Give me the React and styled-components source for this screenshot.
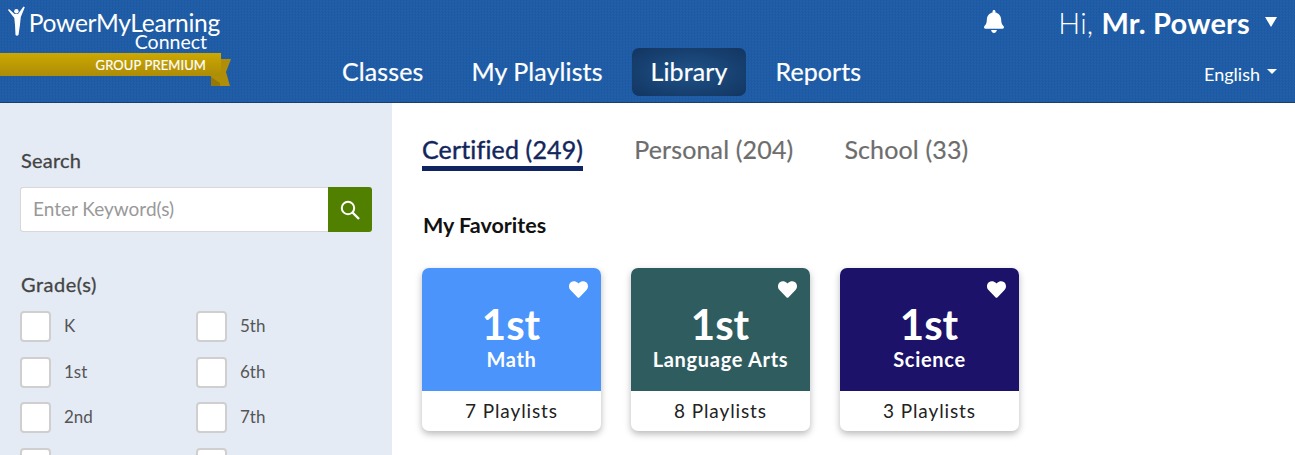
import styled, { createGlobalStyle } from 'styled-components';
import { FaBell, FaHeart } from 'react-icons/fa';

const GlobalStyle = createGlobalStyle`
  html, body { margin: 0; padding: 0; height: 100%; overflow: hidden; background: #fff; }
  body { font-family: Lato, "Open Sans", "Liberation Sans", sans-serif; }
`;

const grades = ['K', '5th', '1st', '6th', '2nd', '7th', '', ''];

const favorites = [
  { subject: 'Math', count: '7 Playlists', color: '#4a94fb' },
  { subject: 'Language Arts', count: '8 Playlists', color: '#2f5d5f' },
  { subject: 'Science', count: '3 Playlists', color: '#1c1269' },
];

export default function App() {
  return (
    <Page>
      <GlobalStyle />
      <Header>
        <Logo>
          <LogoTop>
            <Figure viewBox="0 0 18 31">
              <path
                d="M0 4 L1 3 L6.5 8 L10 8 L15.5 .5 L16.8 1.2 L12.8 11 L11.8 20 L10.5 29 Q9 30.5 7.5 29 L7 19 L6.3 12 Z"
                fill="#fff"
              />
              <circle cx="8.4" cy="5.2" r="2.2" fill="#fff" />
            </Figure>
            <LogoWords>
              <LogoName>PowerMyLearning</LogoName>
              <LogoSub>Connect</LogoSub>
            </LogoWords>
          </LogoTop>
          <Ribbon>
            <RibbonTail viewBox="0 0 20 28">
              <path d="M0 0 H20 L15 13 L19 27 H0 Z" fill="#b08e08" />
              <path d="M0 18 L9 24 V27 H0 Z" fill="#967804" />
            </RibbonTail>
            <RibbonBand>GROUP PREMIUM</RibbonBand>
          </Ribbon>
        </Logo>
        <HeaderMain>
          <TopRow>
            <BellIcon />
            <Greeting>
              Hi, <strong>Mr. Powers</strong>
            </Greeting>
            <BigCaret viewBox="0 0 12 10">
              <path d="M0 0 H12 L6 10 Z" fill="#fff" />
            </BigCaret>
          </TopRow>
          <BottomRow>
            <Nav>
              <NavItem>Classes</NavItem>
              <NavItem>My Playlists</NavItem>
              <NavItem $active>Library</NavItem>
              <NavItem>Reports</NavItem>
            </Nav>
            <Language>
              English
              <SmallCaret viewBox="0 0 10 5">
                <path d="M0 0 H10 L5 5 Z" fill="#fff" />
              </SmallCaret>
            </Language>
          </BottomRow>
        </HeaderMain>
      </Header>
      <Body>
        <Sidebar>
          <FilterLabel>Search</FilterLabel>
          <SearchBox>
            <SearchInput placeholder="Enter Keyword(s)" />
            <SearchButton>
              <svg width="22" height="22" viewBox="0 0 22 22" fill="none" stroke="#fff">
                <circle cx="9" cy="9" r="6.2" strokeWidth="2" />
                <path d="M13.5 13.5 L20 20" strokeWidth="2.4" />
              </svg>
            </SearchButton>
          </SearchBox>
          <GradeLabel>Grade(s)</GradeLabel>
          <GradeGrid>
            {grades.map((grade, index) => (
              <GradeOption key={index}>
                <CheckBox />
                <GradeText>{grade}</GradeText>
              </GradeOption>
            ))}
          </GradeGrid>
        </Sidebar>
        <Content>
          <Tabs>
            <Tab $active>Certified (249)</Tab>
            <Tab>Personal (204)</Tab>
            <Tab>School (33)</Tab>
          </Tabs>
          <SectionTitle>My Favorites</SectionTitle>
          <Cards>
            {favorites.map((item) => (
              <Card key={item.subject}>
                <CardTop $color={item.color}>
                  <HeartIcon />
                  <CardGrade>1st</CardGrade>
                  <CardSubject>{item.subject}</CardSubject>
                </CardTop>
                <CardCount>{item.count}</CardCount>
              </Card>
            ))}
          </Cards>
        </Content>
      </Body>
    </Page>
  );
}

const Page = styled.div`
  width: 1295px;
  height: 455px;
  overflow: hidden;
  display: flex;
  flex-direction: column;
`;
const Header = styled.header`
  height: 102px;
  flex: none;
  display: flex;
  background: repeating-conic-gradient(#1e5aa3 0 25%, #2160a8 0 50%) 0 0 / 3px 3px;
  border-bottom: 1px solid #17406f;
`;
const Logo = styled.div`
  width: 323.5px;
  flex: none;
  padding-top: 6px;
`;
const LogoTop = styled.div`
  display: flex;
  align-items: flex-start;
  padding-left: 8px;
  gap: 2px;
`;
const Figure = styled.svg`
  width: 18px;
  height: 31px;
  flex: none;
`;
const LogoWords = styled.div`
  width: 192px;
  display: flex;
  flex-direction: column;
  align-items: flex-end;
  color: #fff;
  margin-top: 6px;
`;
const LogoName = styled.div`
  font-size: 24.6px;
  line-height: 22px;
  letter-spacing: -0.3px;
  white-space: nowrap;
`;
const LogoSub = styled.div`
  font-size: 19.5px;
  line-height: 15px;
  padding-right: 13px;
`;
const Ribbon = styled.div`
  position: relative;
  margin-top: 4px;
  width: 221px;
`;
const RibbonBand = styled.div`
  position: relative;
  height: 23px;
  line-height: 24px;
  background: linear-gradient(#cca800, #ad8c08);
  color: #fff;
  font-size: 13px;
  letter-spacing: 0.1px;
  -webkit-text-stroke: 0.2px #fff;
  text-align: right;
  padding-right: 15px;
  box-sizing: border-box;
`;
const RibbonTail = styled.svg`
  position: absolute;
  left: 211px;
  top: 6px;
  width: 20px;
  height: 28px;
`;
const HeaderMain = styled.div`
  flex: 1;
  display: flex;
  flex-direction: column;
  min-width: 0;
`;
const TopRow = styled.div`
  height: 48px;
  display: flex;
  align-items: center;
  justify-content: flex-end;
  color: #fff;
  padding-right: 18px;
`;
const BellIcon = styled(FaBell)`
  width: 20px;
  height: 25px;
  color: #fff;
  margin-right: 54px;
  margin-top: -6px;
`;
const Greeting = styled.div`
  font-size: 29px;
  line-height: 34px;
  font-weight: 300;
  letter-spacing: 0.2px;
  margin-top: -2px;
  strong {
    font-weight: 700;
  }
`;
const BigCaret = styled.svg`
  width: 12px;
  height: 10px;
  margin-left: 15px;
  margin-top: -4px;
`;
const BottomRow = styled.div`
  display: flex;
  align-items: center;
  justify-content: space-between;
  padding-right: 18px;
`;
const Nav = styled.nav`
  display: flex;
  gap: 11px;
`;
const NavItem = styled.div`
  height: 48px;
  line-height: 47px;
  padding: 0 18.5px;
  border-radius: 7px;
  color: #fff;
  font-size: 25px;
  letter-spacing: 0.1px;
  -webkit-text-stroke: 0.2px #fff;
  box-sizing: border-box;
  background: ${(p) =>
    p.$active ? 'radial-gradient(ellipse at center, #1f5288 0%, #123561 100%)' : 'none'};
`;
const Language = styled.div`
  display: flex;
  align-items: center;
  color: #fff;
  font-size: 18px;
  margin-top: 3px;
`;
const SmallCaret = styled.svg`
  width: 10px;
  height: 5px;
  margin-left: 7px;
  margin-top: -4px;
`;
const Body = styled.div`
  flex: 1;
  display: flex;
  min-height: 0;
`;
const Sidebar = styled.aside`
  width: 392px;
  flex: none;
  box-sizing: border-box;
  background: #e5ebf5;
  padding: 45px 20px 0;
  color: #444;
`;
const FilterLabel = styled.div`
  font-size: 20px;
  line-height: 24px;
  color: #444;
  padding-left: 1px;
  letter-spacing: 0.2px;
  -webkit-text-stroke: 0.3px #444;
`;
const SearchBox = styled.div`
  display: flex;
  width: 352px;
  height: 45px;
  margin-top: 15px;
`;
const SearchInput = styled.input`
  flex: 1;
  min-width: 0;
  box-sizing: border-box;
  border: 1px solid #d8d8d8;
  border-right: 0;
  border-radius: 3px 0 0 3px;
  background: #fff;
  padding: 0 12px 2px;
  font-family: inherit;
  font-size: 19px;
  &::placeholder {
    color: #999;
    opacity: 1;
  }
`;
const SearchButton = styled.div`
  width: 44px;
  flex: none;
  background: #518000;
  border-radius: 0 3px 3px 0;
  display: flex;
  align-items: center;
  justify-content: center;
`;
const GradeLabel = styled(FilterLabel)`
  margin-top: 40px;
  letter-spacing: 0.5px;
`;
const GradeGrid = styled.div`
  display: grid;
  grid-template-columns: 176px 176px;
  row-gap: 14.5px;
  margin-top: 15px;
`;
const GradeOption = styled.label`
  display: flex;
  align-items: center;
  gap: 13px;
  font-size: 17px;
  color: #555;
`;
const GradeText = styled.span`
  margin-top: -2px;
`;
const CheckBox = styled.span`
  width: 31px;
  height: 31px;
  flex: none;
  box-sizing: border-box;
  background: #fff;
  border: 2px solid #cfcfcf;
  border-radius: 4px;
`;
const Content = styled.main`
  flex: 1;
  padding: 31px 0 0 30px;
  min-width: 0;
`;
const Tabs = styled.div`
  display: flex;
  gap: 51px;
`;
const Tab = styled.div`
  height: 37px;
  font-size: 25px;
  line-height: 30px;
  letter-spacing: 0.15px;
  box-sizing: border-box;
  color: ${(p) => (p.$active ? '#13265c' : '#6d6d6d')};
  -webkit-text-stroke: ${(p) => (p.$active ? '0.4px #13265c' : '0.2px #6d6d6d')};
  border-bottom: ${(p) => (p.$active ? '5px solid #0f2460' : '0')};
`;
const SectionTitle = styled.h2`
  margin: 40px 0 0 1px;
  font-size: 21.5px;
  line-height: 28px;
  font-weight: 700;
  color: #111;
`;
const Cards = styled.div`
  display: flex;
  gap: 30px;
  margin-top: 29px;
`;
const Card = styled.div`
  width: 179px;
  height: 163px;
  border-radius: 7px;
  overflow: hidden;
  background: #fff;
  box-shadow: 0 3px 7px rgba(0, 0, 0, 0.28);
`;
const CardTop = styled.div`
  position: relative;
  height: 123px;
  box-sizing: border-box;
  padding-top: 34px;
  background: ${(p) => p.$color};
  color: #fff;
  text-align: center;
`;
const HeartIcon = styled(FaHeart)`
  position: absolute;
  top: 12px;
  right: 13px;
  width: 19px;
  height: 19px;
  color: #fff;
`;
const CardGrade = styled.div`
  font-size: 42px;
  line-height: 44px;
  font-weight: 700;
  margin-left: -1px;
`;
const CardSubject = styled.div`
  font-size: 20px;
  line-height: 24px;
  font-weight: 700;
  letter-spacing: 0.7px;
  margin-top: 1px;
`;
const CardCount = styled.div`
  height: 40px;
  line-height: 39px;
  text-align: center;
  font-size: 19px;
  letter-spacing: 0.9px;
  color: #222;
`;
